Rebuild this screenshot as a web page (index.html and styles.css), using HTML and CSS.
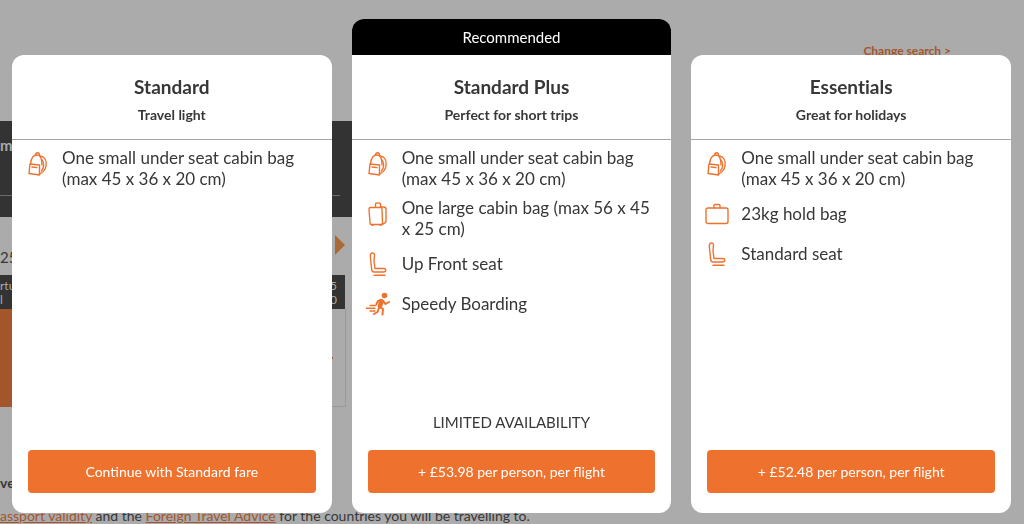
FILE: index.html
```html
<!DOCTYPE html>
<html lang="en">
<head>
    <meta charset="UTF-8">
    <meta name="viewport" content="width=device-width, initial-scale=1.0">
    <title>Choose your fare</title>
    <link rel="stylesheet" href="styles.css">
</head>
<body>
    <!-- Icons shared by the fare cards -->
    <svg class="sprite" aria-hidden="true">
        <symbol id="backpack" viewBox="0 0 24 24">
            <path d="M4.500 12C5 7 7 3 11 3c4 0 5 5 5 10"/>
            <path d="M9.500 3c0-3 4-3 4 0"/>
            <path d="M4 12l9.500 1v10L3 21.500z"/>
            <path d="M6 15l5 .6"/>
            <path d="M14.500 4c4.500 1 6.500 5 5.500 10-.7 4-3 6.500-6.500 8"/>
            <path d="M16 8c2.500 3 2 8-.5 11"/>
        </symbol>
        <symbol id="cabin" viewBox="0 0 24 24">
            <path d="M9.500 5V2c0-1.500 5-1.500 5 0v3"/>
            <path d="M4.500 5.500h10c1 0 1.500.5 1.500 1.500l.5 14c0 1-.5 1.500-1.500 1.500H5.500c-1 0-1.500-.5-1.500-1.500L3 7c0-1 .5-1.500 1.500-1.500z"/>
            <path d="M14.500 5h3c1.500 0 2.500 1 2.500 2.500V19c0 1.500-1.500 2.500-4 3.500"/>
            <path d="M6 23.300h1M14 23.300h1"/>
        </symbol>
        <symbol id="hold" viewBox="0 0 24 24">
            <rect x="1" y="6" width="22" height="15.500" rx="2"/>
            <path d="M9 6V3.500c0-.6.4-1 1-1h4c.6 0 1 .4 1 1V6"/>
        </symbol>
        <symbol id="seat" viewBox="0 0 24 24">
            <path d="M4.500 2.500c.5-2 4-2 4 .5L8 9l1 7.500h8.500c3 0 3 3.500 0 3.500H8c-1.500 0-2-.7-2.300-2L4.500 6c-.2-1.500-.2-2.500 0-3.500z"/>
            <path d="M8 23.200h11"/>
        </symbol>
        <symbol id="runner" viewBox="0 0 24 24">
            <circle class="solid" cx="18.500" cy="3.500" r="2.800"/>
            <path class="limb" d="M12 9l4-1M12 9l-1.500 3M17 9l2.500 3 3.500-2M14 15l3 2-.5 5.500M13 16l-1.500 4L8 22"/>
            <path class="solid" d="M13.500 7l4.500 1-1.500 6-2 3-3-2z"/>
            <path d="M4 13.500h6M0 16.200h9M4 19h5"/>
        </symbol>
    </svg>

    <div class="page">
        <div class="top-bar"><a href="#">Change search &gt;</a></div>
        <div class="banner"><span>m</span></div>
        <div class="date-row">
            <span>25</span>
            <svg class="next" viewBox="0 0 10 20"><path d="M0 0l10 10L0 20z"/></svg>
        </div>
        <div class="flight-head">
            <span>rtu<br>l</span>
            <span>5<br>0</span>
        </div>
        <div class="flight-body"><span class="selected"></span><i class="mark"></i></div>
        <h2>ve</h2>
        <p><a href="#">assport validity</a> and the <a href="#">Foreign Travel Advice</a> for the countries you will be travelling to.</p>
    </div>

    <div class="overlay">
        <section class="card">
            <div class="card-head">
                <h3>Standard</h3>
                <p>Travel light</p>
            </div>
            <ul>
                <li><svg><use href="#backpack"/></svg><span>One small under seat cabin bag (max 45 x 36 x 20 cm)</span></li>
            </ul>
            <button>Continue with Standard fare</button>
        </section>

        <section class="card recommended">
            <div class="ribbon">Recommended</div>
            <div class="card-head">
                <h3>Standard Plus</h3>
                <p>Perfect for short trips</p>
            </div>
            <ul>
                <li><svg><use href="#backpack"/></svg><span>One small under seat cabin bag (max 45 x 36 x 20 cm)</span></li>
                <li><svg><use href="#cabin"/></svg><span>One large cabin bag (max 56 x 45 x 25 cm)</span></li>
                <li><svg><use href="#seat"/></svg><span>Up Front seat</span></li>
                <li><svg><use href="#runner"/></svg><span>Speedy Boarding</span></li>
            </ul>
            <div class="availability">LIMITED AVAILABILITY</div>
            <button>+ £53.98 per person, per flight</button>
        </section>

        <section class="card">
            <div class="card-head">
                <h3>Essentials</h3>
                <p>Great for holidays</p>
            </div>
            <ul>
                <li><svg><use href="#backpack"/></svg><span>One small under seat cabin bag (max 45 x 36 x 20 cm)</span></li>
                <li><svg><use href="#hold"/></svg><span>23kg hold bag</span></li>
                <li><svg><use href="#seat"/></svg><span>Standard seat</span></li>
            </ul>
            <button>+ £52.48 per person, per flight</button>
        </section>
    </div>
</body>
</html>
```
FILE: styles.css
```css
* {
    box-sizing: border-box;
}
body {
    margin: 0;
    height: 100vh;
    overflow: hidden;
    font-family: Lato, sans-serif;
    font-variant-ligatures: none;
    color: #373737;
    background-color: #ababab;
}
h2, h3, p, ul {
    margin: 0;
    padding: 0;
}
.sprite {
    display: none;
}

/* Page behind the fare picker, already dimmed */
.page a {
    color: #a3562b;
}
.top-bar {
    height: 121px;
    padding: 44px 73px 0 0;
    text-align: right;
    font-size: 12px;
    font-weight: bold;
    line-height: 14px;
}
.banner {
    width: 36%;
    height: 96px;
    padding-top: 14px;
    background-color: #333333;
    color: #ababab;
    font-size: 15px;
    font-weight: bold;
    line-height: 20px;
}
.banner::after {
    content: "";
    display: block;
    width: 340px;
    margin-top: 40px;
    border-top: 1px solid #6b6b6b;
}
.date-row {
    display: flex;
    justify-content: space-between;
    width: 345px;
    height: 58px;
    padding-top: 18px;
    font-size: 15px;
}
.date-row span {
    padding-top: 13px;
}
.next {
    width: 10px;
    height: 20px;
    fill: #ab6a35;
}
.flight-head {
    display: flex;
    justify-content: space-between;
    width: 345px;
    height: 34px;
    padding: 4px 8px 0 0;
    background-color: #333333;
    color: #ababab;
    font-size: 12px;
    line-height: 14px;
}
.flight-body {
    display: flex;
    justify-content: space-between;
    align-items: center;
    width: 346px;
    height: 98px;
    padding-right: 12px;
    border: 1px solid #999999;
    border-width: 0 1px 1px 0;
}
.selected {
    width: 40px;
    height: 98px;
    background-color: #a3562b;
}
.mark {
    width: 3px;
    height: 2px;
    background-color: #a3562b;
}
.page h2 {
    margin-top: 66px;
    font-size: 14px;
    line-height: 20px;
}
.page p {
    margin-top: 13px;
    font-size: 14px;
    line-height: 20px;
    white-space: nowrap;
}

.overlay {
    position: fixed;
    inset: 0;
    display: grid;
    grid-template-columns: repeat(3, 1fr);
    gap: 20px;
    padding: 19px 13px 11px 12px;
}
.card {
    display: flex;
    flex-direction: column;
    margin-top: 36px;
    padding-bottom: 20px;
    background-color: #ffffff;
    border-radius: 12px;
    overflow: hidden;
}
.recommended {
    margin-top: 0;
}
.ribbon {
    height: 36px;
    line-height: 36px;
    background-color: #000000;
    color: #ffffff;
    text-align: center;
    font-size: 15px;
}
.card-head {
    height: 85px;
    padding-top: 20px;
    border-bottom: 1px solid #a5a5a0;
    text-align: center;
    font-weight: bold;
}
.card-head h3 {
    font-size: 19px;
    line-height: 24px;
}
.card-head p {
    margin-top: 6px;
    font-size: 14px;
    line-height: 20px;
}
.card ul {
    flex: 1;
    padding: 4px 16px 0 14px;
    list-style: none;
}
.card li {
    display: flex;
    gap: 12px;
    min-height: 40px;
    font-size: 17px;
    line-height: 21px;
}
.card li span {
    padding: 3px 0 5px;
    margin: auto 0;
}
.card li svg {
    flex: none;
    width: 24px;
    height: 24px;
    margin-top: 8px;
    fill: none;
    stroke: #ee722e;
    stroke-width: 1.4;
    stroke-linecap: round;
    stroke-linejoin: round;
}
.solid {
    fill: #ee722e;
    stroke: none;
}
.limb {
    stroke-width: 2;
}
.availability {
    margin-bottom: 18px;
    text-align: center;
    font-size: 15px;
    line-height: 20px;
}
.card button {
    height: 43px;
    margin: 0 16px;
    border: none;
    border-radius: 4px;
    background-color: #ee722e;
    color: #ffffff;
    font-family: inherit;
    font-size: 14px;
    cursor: pointer;
}
```
